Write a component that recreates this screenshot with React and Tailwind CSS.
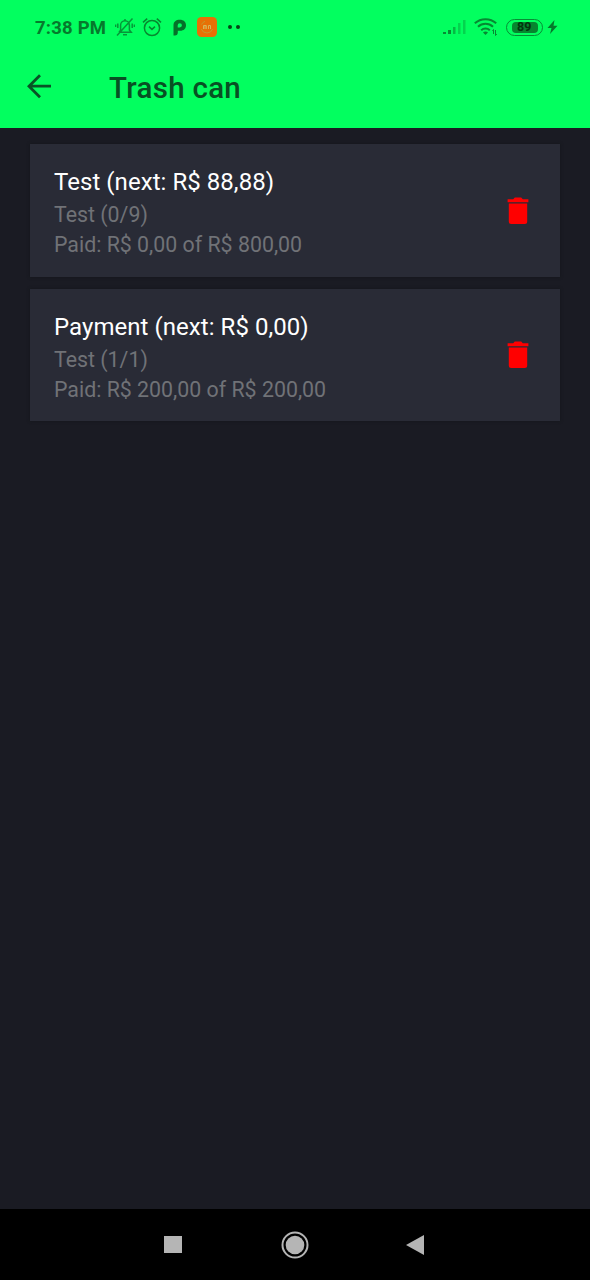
const payments = [
  { title: 'Test (next: R$ 88,88)', count: 'Test (0/9)', paid: 'Paid: R$ 0,00 of R$ 800,00', height: 'h-[133px]' },
  { title: 'Payment (next: R$ 0,00)', count: 'Test (1/1)', paid: 'Paid: R$ 200,00 of R$ 200,00', height: 'h-[132px]' },
];

function StatusBar() {
  return (
    <div className="flex h-[54px] items-center pl-[35px] text-[#06792c]">
      <span className="mt-[2px] w-[80px] text-[18.5px] font-bold leading-none tracking-[0.2px] whitespace-nowrap">7:38 PM</span>
      <svg className="h-5 w-5 shrink-0" viewBox="0 0 20 20" fill="none" stroke="#079638" strokeWidth="1.5">
        <path d="M4 15.2 5.600 13.200V8.2a4.4 4.4 0 0 1 8.800 0V13l1.8 2.2H4M8 17.8h4M10 4V2M17.500 1.500 2 18.500M2.800 6.500v4.500M.6 7.500v2.500M17.200 6.500v4.500M19.400 7.500v2.500" />
      </svg>
      <svg className="ml-[7px] h-5 w-5 shrink-0" viewBox="0 0 20 20" fill="none" stroke="#07882f" strokeWidth="1.5">
        <circle cx="10" cy="11" r="7.6" />
        <path d="M7 9.6 10 12.4 13 9.6M1 5.4 5.2 1.6M19 5.4 14.8 1.6" />
      </svg>
      <svg className="ml-[11px] h-[17px] w-[13px] shrink-0" viewBox="0 0 13 17">
        <path fill="#057129" fillRule="evenodd" d="M.5 6.300C.5 2.700 3 .8 6.800.8S13 3 13 6.300s-2.300 5.500-5.800 5.500H4.800V13.500C4.800 15.500 3.800 16.500 2 16.500H.5ZM4.700 8.400H6.800A2.100 2.100 0 1 0 4.700 6.300Z" />
      </svg>
      <svg className="ml-[11px] h-5 w-5 shrink-0" viewBox="0 0 20 20" fill="none">
        <rect width="20" height="20" rx="4.500" fill="#e77005" />
        <path d="M4.500 7.500A6.500 6.500 0 0 1 8 4.300M4.300 12a6 6 0 0 0 11.300 0" stroke="#c29b2c" />
        <path d="M6.500 12V8.500h2.800V12M8 9v3M11.500 12V8.500h2V12" stroke="#d7b557" />
      </svg>
      <span className="ml-[11px] flex gap-[4px]">
        <i className="h-[4px] w-[4px] rounded-full bg-[#064516]" />
        <i className="h-[4px] w-[4px] rounded-full bg-[#064516]" />
      </span>
      <svg className="ml-[203px] h-[16px] w-[23px] shrink-0" viewBox="0 0 23 16">
        <path d="M0 13h3v2H0zM5 11h3v4H5z" fill="#078c34" />
        <path d="M10 8h2.500v7H10z" fill="#05b944" />
        <path d="M15 4h2.500v11H15zM20 1h2.500v14H20z" fill="#04d34e" />
      </svg>
      <svg className="ml-[8px] h-[18px] w-[24px] shrink-0" viewBox="0 0 24 18" fill="none" stroke="#078832">
        <path d="M.8 5.300a15.800 15.800 0 0 1 21.400 0M4 8.800a11 11 0 0 1 15 0M7.200 12.200a6.300 6.300 0 0 1 8.600 0" strokeWidth="2" />
        <path d="m9 14.500 2.500 2.500 2.500-2.500q-2.500-1.800-5 0Z" fill="#078832" stroke="none" />
        <path d="M19.500 11.500v4.500M18.500 13l1-1.500M21.500 12v5.500l1.300-1.500" />
      </svg>
      <span className="ml-[8px] flex h-[17px] w-[37px] shrink-0 rounded-[9px] border-[1.500px] border-[#078c34] py-[2px] pl-[5px] pr-[4px]">
        <span className="flex flex-1 items-center rounded-[4px] bg-[#07852f] pl-[5px] text-[12.500px] font-bold leading-none text-[#03330d]">89</span>
      </span>
      <svg className="ml-[4px] h-[14px] w-[11px] shrink-0" viewBox="0 0 11 14" fill="#06792c">
        <path d="M7.500 0 .5 8h4L3 14l7.500-8.200h-4Z" />
      </svg>
    </div>
  );
}

function Trash() {
  return (
    <svg className="h-[28px] w-[22px]" viewBox="0 0 22 28" fill="#ff0000">
      <path d="M.6 2.200h5.600L7.800.6h6.400l1.600 1.600h5.600v3H.6ZM1.800 6.500h18.400V24.500a2.500 2.500 0 0 1-2.500 2.500H4.300A2.500 2.500 0 0 1 1.800 24.500Z" />
    </svg>
  );
}

export default function App() {
  return (
    <div className="flex h-[1280px] w-[590px] flex-col overflow-hidden bg-[#1a1b23] font-['Roboto',sans-serif]">
      <header className="h-[128px] shrink-0 bg-[#02ff5f]">
        <StatusBar />
        <div className="flex h-[66px] items-center pl-[27px]">
          <svg className="mb-[2px] h-[25px] w-[25px]" viewBox="0 0 25 25" fill="none" stroke="#095226" strokeWidth="2.800">
            <path d="M13 1.200 2 12.200l11 11M2 12.200h22" />
          </svg>
          <h1 className="ml-[57px] mt-[3px] text-[29.500px] font-medium leading-none tracking-[0.3px] text-[#085023]">Trash can</h1>
        </div>
      </header>
      <main className="flex flex-1 flex-col gap-3 px-[30px] pt-4">
        {payments.map((item, i) => (
          <section key={item.title} className={'flex justify-between bg-[#292b36] pl-[24px] pr-[31px] shadow-[0_0_3px_#14151b] ' + item.height}>
            <div className="pt-[22px] text-[21.350px] leading-[30px] text-[#707277]">
              <h2 className="mb-[2px] text-[24px] leading-[32px] tracking-[0.05px] text-white">{item.title}</h2>
              <p>{item.count}</p>
              <p>{item.paid}</p>
            </div>
            <div className={i === 0 ? 'pt-[53px]' : 'pt-[52px]'}><Trash /></div>
          </section>
        ))}
      </main>
      <nav className="flex h-[71px] shrink-0 items-center bg-black pl-[164px]">
        <span className="h-[17px] w-[18px] bg-[#b5b5b5]" />
        <svg className="ml-[99px] h-[28px] w-[28px]" viewBox="0 0 28 28">
          <circle cx="14" cy="14" r="12.500" fill="none" stroke="#b5b5b5" strokeWidth="2" />
          <circle cx="14" cy="14" r="9.300" fill="#b5b5b5" />
        </svg>
        <svg className="ml-[97px] h-[20px] w-[18px]" viewBox="0 0 18 20" fill="#b5b5b5"><path d="M18 0v20L0 10Z" /></svg>
      </nav>
    </div>
  );
}
